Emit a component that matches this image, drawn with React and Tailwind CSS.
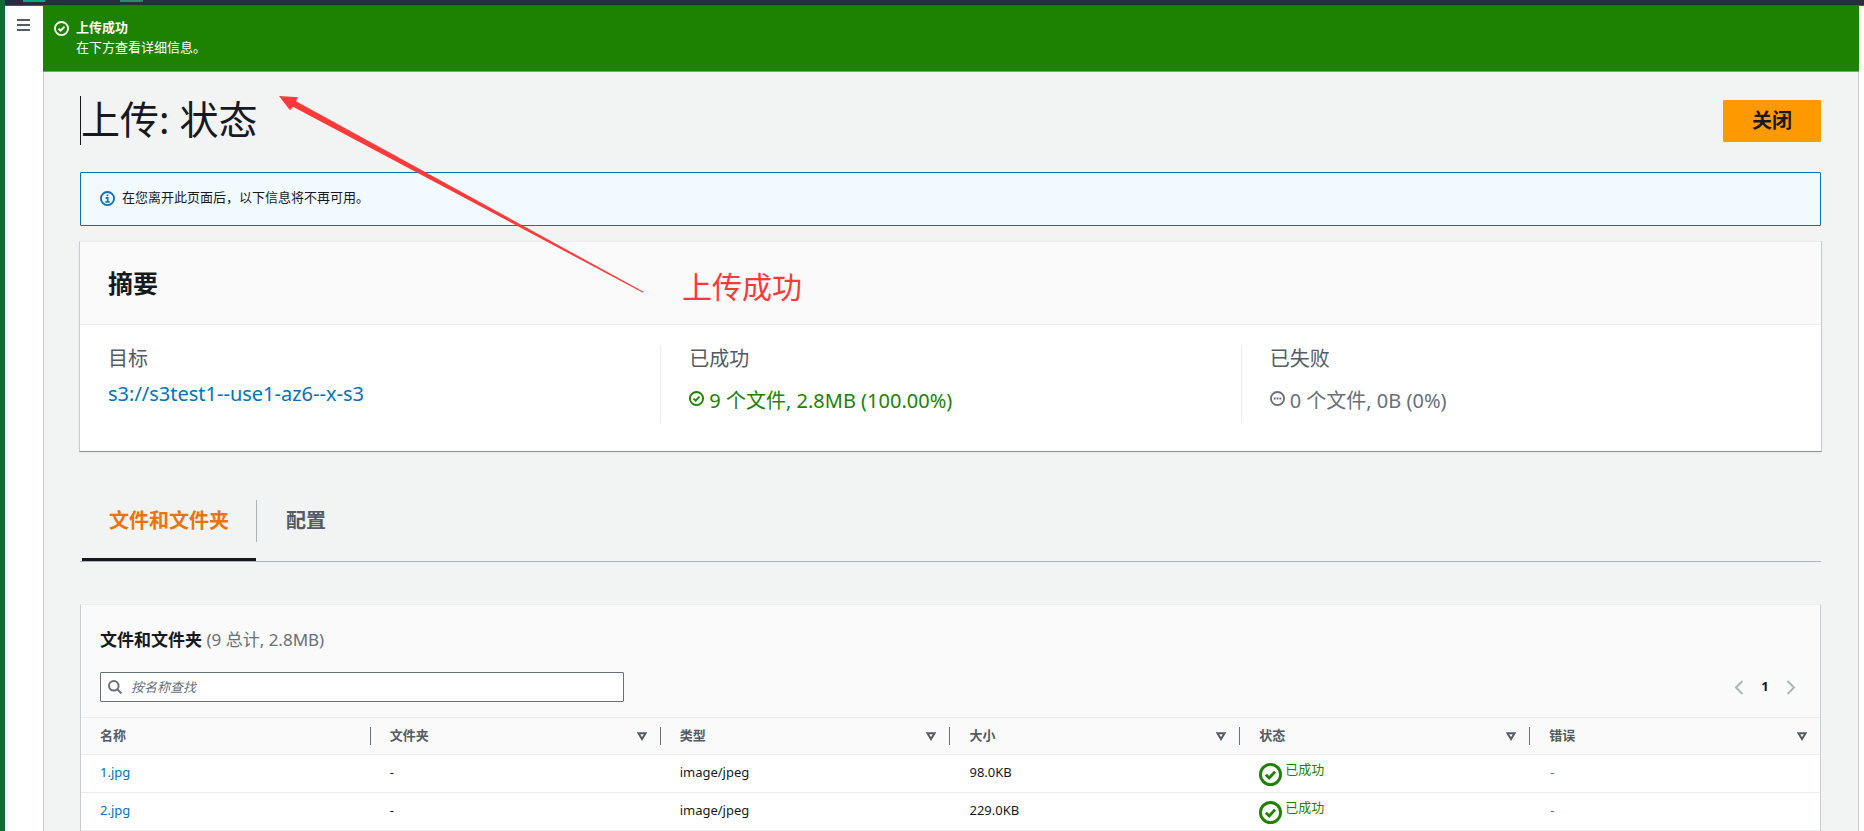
import React from "react";

function StatusCheck({ className }) {
  return (
    <svg viewBox="0 0 16 16" className={className} fill="none" stroke="currentColor" strokeWidth="2" aria-hidden="true">
      <circle cx="8" cy="8" r="7" />
      <path d="M4.8 8.2 7.1 10.4 11.2 6" />
    </svg>
  );
}

function StatusPending({ className }) {
  return (
    <svg viewBox="0 0 16 16" className={className} fill="none" stroke="currentColor" aria-hidden="true">
      <circle cx="8" cy="8" r="7" strokeWidth="2" />
      <path d="M4 8h2M7 8h2M10 8h2" strokeWidth="2" />
    </svg>
  );
}

function InfoIcon({ className }) {
  return (
    <svg viewBox="0 0 16 16" className={className} fill="none" stroke="currentColor" aria-hidden="true">
      <circle cx="8" cy="8" r="7" strokeWidth="2" />
      <path d="M8 3.6v2M6 7.3h2.2v4.4M5.6 11.7h4.8" strokeWidth="1.8" />
    </svg>
  );
}

function SortIcon() {
  return (
    <svg viewBox="0 0 10 9" className="h-[9px] w-[10px] shrink-0" fill="none" stroke="currentColor" strokeWidth="2" aria-hidden="true">
      <path d="M1.4 1.2h7.2L5 7Z" />
    </svg>
  );
}

const columns = ["名称", "文件夹", "类型", "大小", "状态", "错误"];
const files = [
  { name: "1.jpg", size: "98.0KB" },
  { name: "2.jpg", size: "229.0KB" },
];

function Metric({ label, children, divided }) {
  return (
    <div className={divided ? "h-[77px] border-l border-[#eaeded] px-7" : "h-[77px] px-7"}>
      <div className="text-[20px] leading-[26px] text-[#545b64]">{label}</div>
      {children}
    </div>
  );
}

function Annotation() {
  return (
    <>
      <svg viewBox="0 0 370 200" className="pointer-events-none absolute left-[278px] top-[95px] h-[200px] w-[370px]" aria-hidden="true">
        <path fill="#fc3a3a" d="M1 1 20 2.3 18 6.3 365.5 196.8 365 197.8 15 11.7 12 15.3Z" />
      </svg>
      <div className="pointer-events-none absolute left-[682px] top-[267px] text-[30px] leading-[40px] text-[#fc3a3a]">上传成功</div>
    </>
  );
}

export default function App() {
  return (
    <div className="relative flex min-h-screen overflow-hidden bg-white font-['Noto_Sans','Noto_Sans_CJK_SC',sans-serif] text-[13px] text-[#16191f]">
      <div className="w-[5px] shrink-0 bg-[#0f6a34]" />
      <div className="flex min-w-0 flex-1 flex-col">
        <div className="flex h-[6px] items-start gap-[75px] border-b border-[#554a68] bg-[#232f3e] pl-[18px]">
          <span className="h-[2px] w-[22px] bg-[#0aa58c]" />
          <span className="h-[2px] w-[23px] bg-[#2a8a70]" />
        </div>
        <div className="flex flex-1">
          <nav className="w-[38px] shrink-0">
            <button type="button" aria-label="打开导航" className="flex h-[38px] w-9 items-center justify-center text-[#545b64]">
              <svg viewBox="0 0 13 12" className="h-3 w-[13px]" stroke="currentColor" strokeWidth="2" aria-hidden="true">
                <path d="M0 1h13M0 6h13M0 11h13" />
              </svg>
            </button>
          </nav>
          <div className="mr-[5px] flex min-w-0 flex-1 flex-col border-x border-[#c8cccc] bg-[#f2f3f3]">
            <div role="status" className="-mx-px flex h-[66px] gap-[7px] border-b border-[#8c9296] bg-[#1d8102] pl-[11px] pt-[11px] text-white">
              <StatusCheck className="mt-1 h-[15px] w-[15px]" />
              <div className="leading-5">
                <div className="font-bold">上传成功</div>
                <div>在下方查看详细信息。</div>
              </div>
            </div>
            <main className="flex flex-1 flex-col pl-9 pr-[37px]">
              <div className="flex items-start justify-between pt-6">
                <h1 className="h-[49px] border-l border-[#16191f] text-[39px] leading-[45px]">上传: 状态</h1>
                <button type="button" className="mt-1 h-[42px] w-[98px] rounded-[1px] bg-[#ff9900] text-[20px] font-bold leading-[26px]">关闭</button>
              </div>
              <div className="mt-[27px] flex h-[54px] items-start gap-[7px] rounded-[1px] border border-[#0073bb] bg-[#f1faff] pl-[19px] pt-[14px]">
                <InfoIcon className="mt-1 h-[15px] w-[15px] text-[#0073bb]" />
                <p className="leading-5">在您离开此页面后，以下信息将不再可用。</p>
              </div>

              <section className="-mx-px mt-[15px] border border-b-[#879196] border-l-[#c8cdd1] border-r-[#c8cdd1] border-t-[#eaeded] bg-white shadow-xs">
                <h2 className="border-b border-[#eaeded] bg-[#fafafa] px-7 pb-[24px] pt-[24px] text-[25px] font-bold leading-[34px]">摘要</h2>
                <div className="grid grid-cols-3 pb-7 pt-[21px]">
                  <Metric label="目标">
                    <a href="#bucket" className="mt-[9px] block text-[20px] leading-[26px] text-[#0073bb]">s3://s3test1--use1-az6--x-s3</a>
                  </Metric>
                  <Metric label="已成功" divided>
                    <div className="mt-4 flex gap-[5px] text-[20px] leading-[26px] text-[#1d8102]">
                      <StatusCheck className="mt-[3px] h-[15px] w-[15px]" />
                      <span>9 个文件, 2.8MB (100.00%)</span>
                    </div>
                  </Metric>
                  <Metric label="已失败" divided>
                    <div className="mt-4 flex gap-[5px] text-[20px] leading-[26px] text-[#687078]">
                      <StatusPending className="mt-[3px] h-[15px] w-[15px]" />
                      <span>0 个文件, 0B (0%)</span>
                    </div>
                  </Metric>
                </div>
              </section>

              <div role="tablist" className="mt-12 flex border-b border-[#aab7b8] pl-[2px] text-[20px] font-bold leading-[26px]">
                <button type="button" role="tab" aria-selected="true" className="flex h-[61px] items-start border-b-[3px] border-[#16191f] px-[27px] pt-2 text-[#ec7211]">文件和文件夹</button>
                <button type="button" role="tab" aria-selected="false" className="flex h-[42px] items-start border-l border-[#aab7b8] px-[29px] pt-2 text-[#545b64]">配置</button>
              </div>

              <section className="mt-[42px] flex-1 rounded-t-[1px] border border-b-0 border-l-[#c8cdd1] border-r-[#c8cdd1] border-t-[#eaeded] bg-white">
                <div className="bg-[#fafafa] px-[19px] pb-[15px] pt-[23px]">
                  <h2 className="text-[17px] font-bold leading-6">
                    文件和文件夹 <span className="font-normal text-[#687078]">(9 总计, 2.8MB)</span>
                  </h2>
                  <div className="mt-5 flex items-center justify-between">
                    <label className="flex h-[30px] w-[524px] items-center gap-[9px] rounded-[1px] border border-[#687078] bg-white pl-[7px]">
                      <svg viewBox="0 0 14 14" className="h-[14px] w-[14px] shrink-0 text-[#687078]" fill="none" stroke="currentColor" strokeWidth="2" aria-hidden="true">
                        <circle cx="5.8" cy="5.8" r="4.8" />
                        <path d="m9.2 9.2 4.2 4.2" />
                      </svg>
                      <input type="text" aria-label="按名称查找" placeholder="按名称查找" className="h-full min-w-0 flex-1 bg-transparent outline-none placeholder:italic placeholder:text-[#687078]" />
                    </label>
                    <div className="mr-[5px] flex items-center gap-4">
                      <button type="button" aria-label="上一页" className="text-[#aab7b8]">
                        <svg viewBox="0 0 10 15" className="h-[15px] w-[10px]" fill="none" stroke="currentColor" strokeWidth="2" aria-hidden="true"><path d="M8.5 1 2 7.5 8.5 14" /></svg>
                      </button>
                      <button type="button" aria-current="page" className="w-[10px] text-center font-bold">1</button>
                      <button type="button" aria-label="下一页" className="text-[#aab7b8]">
                        <svg viewBox="0 0 10 15" className="h-[15px] w-[10px]" fill="none" stroke="currentColor" strokeWidth="2" aria-hidden="true"><path d="M1.5 1 8 7.5 1.5 14" /></svg>
                      </button>
                    </div>
                  </div>
                </div>
                <table className="w-full table-fixed border-collapse text-left leading-5">
                  <thead className="bg-[#fafafa] text-[#545b64]">
                    <tr className="h-[37px] border-y border-[#eaeded]">
                      {columns.map((name, i) => (
                        <th key={name} scope="col" className="p-0 font-bold">
                          <div className={i < columns.length - 1 ? "flex h-[18px] items-center justify-between border-r border-[#687078] pl-[19px] pr-[13px]" : "flex h-[18px] items-center justify-between pl-[19px] pr-[13px]"}>
                            <span className="pb-[2px]">{name}</span>
                            {i > 0 && <SortIcon />}
                          </div>
                        </th>
                      ))}
                    </tr>
                  </thead>
                  <tbody>
                    {files.map((file) => (
                      <tr key={file.name} className="h-[38px] border-b border-[#eaeded]">
                        <td className="pb-[3px] pl-[19px] pt-0"><a href="#file" className="text-[#0073bb]">{file.name}</a></td>
                        <td className="pb-[3px] pl-[19px] pt-0">-</td>
                        <td className="pb-[3px] pl-[19px] pt-0">image/jpeg</td>
                        <td className="pb-[3px] pl-[19px] pt-0">{file.size}</td>
                        <td className="pb-[3px] pl-[19px] pt-0">
                          <div className="flex items-start gap-[3px] text-[#1d8102]">
                            <StatusCheck className="mt-1 h-[23px] w-[23px]" />
                            <span>已成功</span>
                          </div>
                        </td>
                        <td className="pb-[3px] pl-5 pt-0 text-[#687078]">-</td>
                      </tr>
                    ))}
                  </tbody>
                </table>
              </section>
            </main>
          </div>
        </div>
      </div>
      <Annotation />
    </div>
  );
}
